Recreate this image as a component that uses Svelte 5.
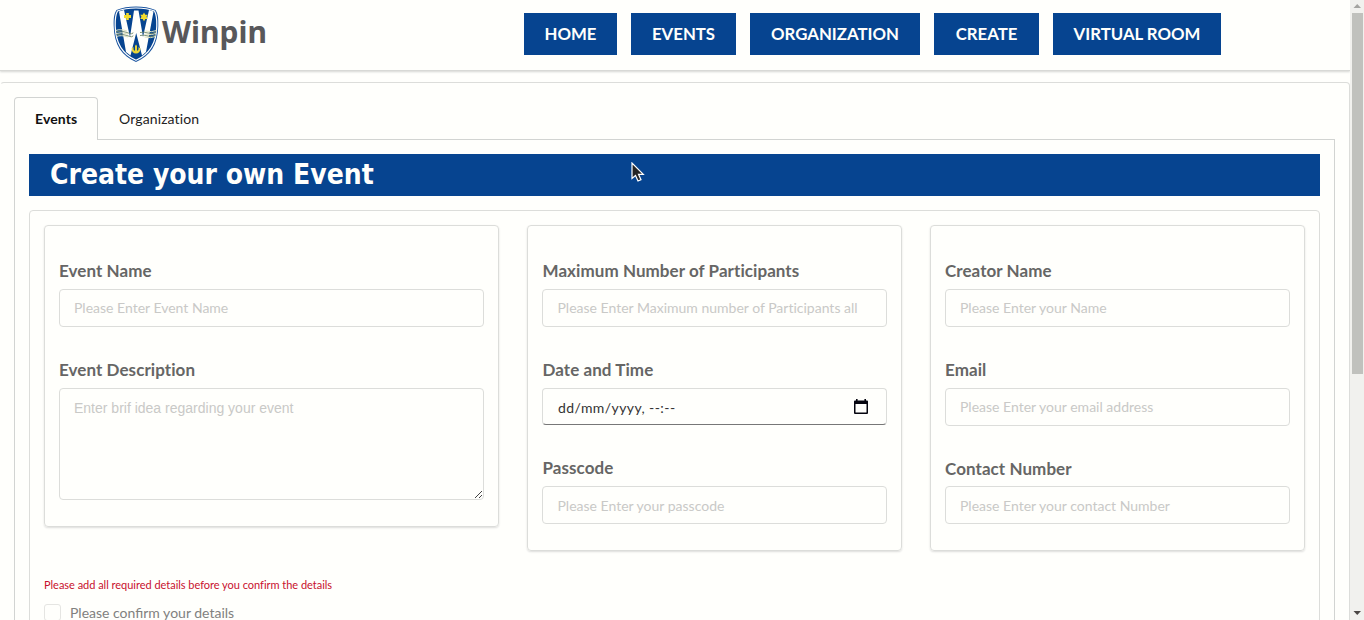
<script>
  const nav = ['HOME', 'EVENTS', 'ORGANIZATION', 'CREATE', 'VIRTUAL ROOM'];
  const navWidths = [93, 105, 170, 105, 168];
</script>

<div class="window">
  <div class="page">
    <header>
      <div class="brand">
        <svg width="46" height="57" viewBox="0 0 46 57">
          <path d="M23 .5C30 .5 37 1.500 42.500 4C45 8 45.500 12 45.300 20C45 39 37 50 23 56C9 50 1 39 .7 20C.5 12 1 8 3.500 4C9 1.500 16 .5 23 .5Z" fill="#1c56a0" />
          <path d="M23 2C30 2 36.500 3 41.500 5C43.700 9 44 13 43.800 20C43.500 38 36 48.500 23 54.300C10 48.500 2.500 38 2.200 20C2 13 2.300 9 4.500 5C9.500 3 16 2 23 2Z" fill="#064490" stroke="#fff" stroke-width="1.200" />
          <path d="M6 5.500L11 4L17 31L21 4.500H25.500L30 31L36 4L40.500 5.500L33 46L29 49.500L23.200 27L17.500 49.500L13 46Z" fill="#fffffc" />
          <g stroke="#dfe3c0" stroke-width="1" fill="none"><path d="M2.800 24.500Q7 22.700 14 25M3 27.500Q8 25.700 15 28M3.500 30.500Q8 28.700 15 31M32.500 25Q39 26.500 43.500 24.500M32 28Q39 29.500 43 27.500M31.500 31Q38 32.500 42.500 30.500" /></g>
          <g stroke="#71886b" stroke-width=".9" fill="none"><path d="M3 25.800Q8 24 14 26.500T20 26.500M3.200 28.900Q8 27 14 29.500T20 29.500M27 26.500Q31 25.500 35 27T43.300 25.800M27 29.500Q31 28.500 35 30T43 28.900" /></g>
          <path d="M13.200 7H15.800V9H18V12H15.800V14H13.200V12H11V9H13.200ZM31 6.500L32.300 8.700H34.700L33.500 10.800L34.700 13H32.300L31 15.200L29.700 13H27.300L28.500 10.800L27.300 8.700H29.700Z" fill="#f3dc2c" />
          <path d="M22 40L23 38.500L24 40V45L25.500 43.500V41L27.500 42.500Q27 47.500 23 47.500Q19 47.500 18.500 42.500L20.500 41V43.500L22 45Z" fill="#e9d638" />
        </svg>
        <span>Winpin</span>
      </div>
      <nav>
        {#each nav as item, i}
          <a style:width="{navWidths[i]}px">{item}</a>
        {/each}
      </nav>
    </header>

    <main>
      <div class="tabs">
        <div class="tab active">Events</div>
        <div class="tab">Organization</div>
        <div class="rule"></div>
      </div>
      <section class="panel">
        <h1>Create your own Event</h1>
        <div class="form">
          <div class="cards">
            <div class="card wide">
              <div class="label">Event Name</div>
              <div class="input">Please Enter Event Name</div>
              <div class="label">Event Description</div>
              <div class="input area">
                Enter brif idea regarding your event
                <svg class="grip" width="9" height="9" viewBox="0 0 9 9"><path d="M1 8L8 1M5 8L8 5" stroke="#444" stroke-width="1" /></svg>
              </div>
            </div>
            <div class="card middle">
              <div class="label">Maximum Number of Participants</div>
              <div class="input">Please Enter Maximum number of Participants all</div>
              <div class="label">Date and Time</div>
              <div class="input date">
                <span>dd/mm/yyyy, --:--</span>
                <svg width="14" height="16" viewBox="0 0 14 16"><path d="M0 2.500Q0 1.500 1 1.500H2V0H3.600V1.500H10.400V0H12V1.500H13Q14 1.500 14 2.500V14Q14 15 13 15H1Q0 15 0 14ZM1.500 5V13.500H12.500V5Z" fill="#05050f" fill-rule="evenodd" /></svg>
              </div>
              <div class="label">Passcode</div>
              <div class="input last">Please Enter your passcode</div>
            </div>
            <div class="card">
              <div class="label">Creator Name</div>
              <div class="input">Please Enter your Name</div>
              <div class="label">Email</div>
              <div class="input">Please Enter your email address</div>
              <div class="label tight">Contact Number</div>
              <div class="input last">Please Enter your contact Number</div>
            </div>
          </div>
          <p class="warning">Please add all required details before you confirm the details</p>
          <div class="confirm"><i></i><span>Please confirm your details</span></div>
        </div>
      </section>
    </main>
  </div>

  <div class="scrollbar">
    <svg width="14" height="13" viewBox="0 0 14 13"><path d="M3.500 8H11L7.250 4Z" fill="#a4a4a1" /></svg>
    <div class="thumb"></div>
    <svg width="14" height="13" viewBox="0 0 14 13"><path d="M3.500 4H11L7.250 8Z" fill="#4b4745" /></svg>
  </div>

  <svg class="cursor" width="14" height="21" viewBox="0 0 14 21"><path d="M1 1V16.500L4.500 13.500L7 19L10 17.700L7.500 12.300H12.300Z" fill="#252525" stroke="#fff" stroke-width="1.200" /></svg>
</div>

<style>
  :global(body) { margin: 0; overflow: hidden; }
  * { box-sizing: border-box; }
  .window { position: relative; display: flex; width: 1364px; height: 620px; overflow: hidden; background: #fffffc; font-family: Lato, sans-serif; font-size: 14px; font-variant-ligatures: none; color: #222; }
  .page { width: 1350px; height: 620px; overflow: hidden; }
  header { display: flex; align-items: flex-start; justify-content: space-between; height: 71px; padding: 13px 129px 0 113px; border-bottom: 1px solid #d8d9d6; box-shadow: 0 1px 2px #22242630; }
  .brand { display: flex; margin-top: -7px; color: #58585a; font: bold 30px/51px "Noto Sans", sans-serif; }
  .brand span { margin-left: 3px; white-space: nowrap; }
  nav { display: flex; gap: 14px; }
  nav a { height: 42px; background: #064490; color: #fffffc; text-align: center; font-size: 16.8px; font-weight: 700; line-height: 42px; white-space: nowrap; }
  main { height: 600px; margin-top: 11px; padding: 14px 14px 0; border: 1px solid #dcddda; border-left-color: transparent; border-radius: 4px; padding-left: 13px; }
  .tabs { display: flex; height: 43px; }
  .tab { height: 43px; padding: 0 21px; line-height: 43px; letter-spacing: .12px; border-bottom: 1px solid #d2d4d2; }
  .tab.active { width: 84px; padding: 0 20px; border: 1px solid #d2d4d2; border-bottom: 0; border-radius: 4px 4px 0 0; line-height: 41px; font-weight: 700; color: #111; }
  .rule { flex: 1; border-bottom: 1px solid #d2d4d2; }
  .panel { height: 540px; padding: 14px; border: 1px solid #d2d4d2; border-top: 0; }
  h1 { height: 42px; margin: 0 0 14px; padding-left: 21px; background: #064490; color: #fffffc; font: bold 28px/42px "DejaVu Sans Condensed", "DejaVu Sans", sans-serif; font-stretch: condensed; }
  .form { height: 460px; padding: 14px; border: 1px solid #dcddda; border-radius: 4px; }
  .cards { display: flex; align-items: flex-start; gap: 28px; height: 326px; }
  .card { width: 375px; height: 326px; padding: 35px 14px 0; border: 1px solid #dcddda; border-radius: 4px; box-shadow: 0 1px 2px #22242626; }
  .wide { width: 455px; height: 302px; }
  .label { height: 20px; margin-bottom: 8px; font-size: 17px; font-weight: 700; line-height: 20px; letter-spacing: .065px; color: #666665; white-space: nowrap; }
  .tight { margin-bottom: 7px; }
  .middle .label { padding-left: .5px; }
  .input { height: 38px; margin-bottom: 33px; padding: 0 14px; border: 1px solid #dcddda; border-radius: 4px; line-height: 36px; color: #c9c9c7; white-space: nowrap; overflow: hidden; }
  .middle .input { padding-left: 14.5px; }
  .last { line-height: 38px; }
  .area { position: relative; height: 112px; line-height: 38px; font-family: "Liberation Sans", Arial, sans-serif; }
  .grip { position: absolute; right: 0; bottom: 0; }
  .middle .date { display: flex; justify-content: space-between; height: 37px; margin-bottom: 33px; padding: 0 18.500px 0 15px; color: #333; border-bottom-color: #777; line-height: 38px; }
  .date span { letter-spacing: .42px; }
  .date svg { margin-top: 9.500px; }
  .warning { margin: 25px 0 0; color: #c8102e; font-size: 11px; line-height: 18px; letter-spacing: -.025px; font-variant-ligatures: normal; white-space: nowrap; }
  .confirm { display: flex; gap: 9px; margin-top: 10px; color: #81817f; line-height: 17px; }
  .confirm span { font-variant-ligatures: normal; }
  .confirm i { width: 17px; height: 17px; border: 1px solid #e5e5e2; border-radius: 3px; }
  .scrollbar { display: flex; flex-direction: column; width: 14px; height: 620px; background: #f1f1ee; }
  .scrollbar svg { display: block; flex: none; }
  .scrollbar svg:last-child { margin-top: auto; }
  .thumb { width: 11px; height: 361px; margin-left: 2px; background: #c0c1bd; }
  .cursor { position: absolute; left: 631px; top: 162px; }
</style>
